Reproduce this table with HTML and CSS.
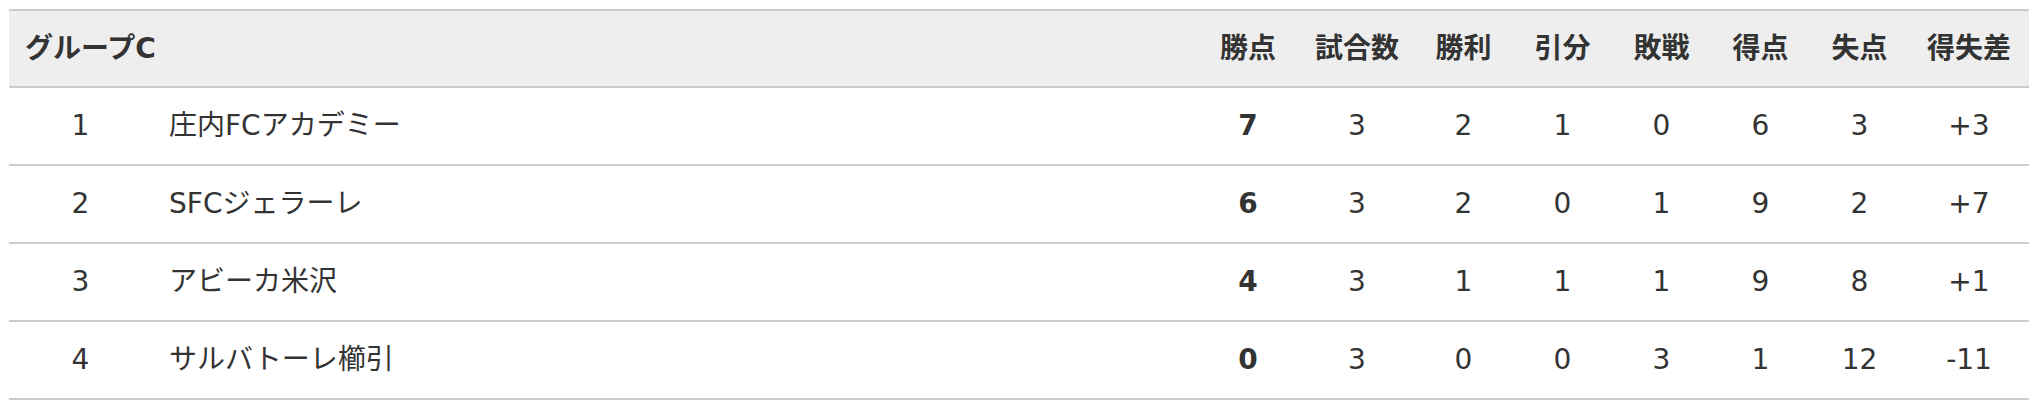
FILE: index.html
```html
<!DOCTYPE html>
<html lang="ja">
<head>
<meta charset="utf-8">
<title>グループC</title>
<link rel="stylesheet" href="styles.css">
</head>
<body>
<table class="standings">
  <colgroup>
    <col class="col-rank">
    <col class="col-team">
    <col class="col-pts">
    <col class="col-played">
    <col class="col-n">
    <col class="col-n">
    <col class="col-n">
    <col class="col-n">
    <col class="col-n">
    <col class="col-diff">
  </colgroup>
  <thead>
    <tr>
      <th class="group" colspan="2">グループC</th>
      <th>勝点</th>
      <th>試合数</th>
      <th>勝利</th>
      <th>引分</th>
      <th>敗戦</th>
      <th>得点</th>
      <th>失点</th>
      <th>得失差</th>
    </tr>
  </thead>
  <tbody>
    <tr>
      <td class="rank">1</td>
      <td class="team">庄内FCアカデミー</td>
      <td class="pts">7</td><td>3</td><td>2</td><td>1</td><td>0</td><td>6</td><td>3</td><td>+3</td>
    </tr>
    <tr>
      <td class="rank">2</td>
      <td class="team">SFCジェラーレ</td>
      <td class="pts">6</td><td>3</td><td>2</td><td>0</td><td>1</td><td>9</td><td>2</td><td>+7</td>
    </tr>
    <tr>
      <td class="rank">3</td>
      <td class="team">アビーカ米沢</td>
      <td class="pts">4</td><td>3</td><td>1</td><td>1</td><td>1</td><td>9</td><td>8</td><td>+1</td>
    </tr>
    <tr>
      <td class="rank">4</td>
      <td class="team">サルバトーレ櫛引</td>
      <td class="pts">0</td><td>3</td><td>0</td><td>0</td><td>3</td><td>1</td><td>12</td><td>-11</td>
    </tr>
  </tbody>
</table>
</body>
</html>
```
FILE: styles.css
```css
html, body {
  margin: 0;
  padding: 0;
  background: #ffffff;
}

body {
  padding: 9px 0 0 9px;
  font-family: "DejaVu Sans", "Noto Sans CJK JP", sans-serif;
  color: #333333;
}

.standings {
  width: 2020px;
  table-layout: fixed;
  border-collapse: collapse;
  border-top: 2px solid #cccccc;
  font-size: 28px;
}

.col-rank { width: 143px; }
.col-pts { width: 104px; }
.col-played { width: 114px; }
.col-n { width: 99px; }
.col-diff { width: 120px; }

.standings th {
  background: #eeeeee;
  height: 75px;
  padding: 0;
  font-family: "DejaVu Sans", "Noto Sans CJK JP", sans-serif;
  font-weight: 700;
  text-align: center;
  vertical-align: middle;
  border-bottom: 2px solid #cccccc;
  line-height: 1;
}

.standings th.group {
  text-align: left;
  padding-left: 16px;
}

.standings td {
  height: 76px;
  padding: 0;
  text-align: center;
  vertical-align: middle;
  border-bottom: 2px solid #cccccc;
  line-height: 1;
}

.standings td.team {
  text-align: left;
  padding-left: 17px;
}

.standings td.pts {
  font-weight: 700;
}
```
